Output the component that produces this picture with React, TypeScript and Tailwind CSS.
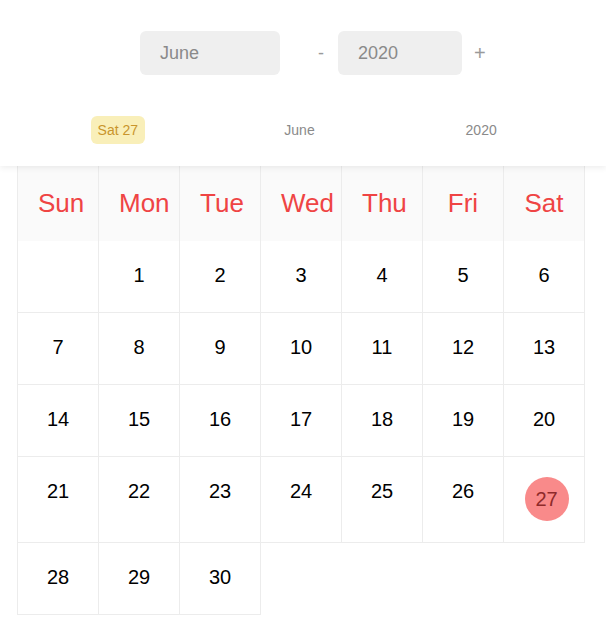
import React from "react";

const DAYS = ["Sun", "Mon", "Tue", "Wed", "Thu", "Fri", "Sat"];

type Cell = { day: number | null };

function buildWeeks(): Cell[][] {
	// June 2020 starts on a Monday, 30 days
	const cells: Cell[] = [{ day: null }];
	for (let d = 1; d <= 30; d++) cells.push({ day: d });
	const weeks: Cell[][] = [];
	for (let i = 0; i < cells.length; i += 7) weeks.push(cells.slice(i, i + 7));
	return weeks;
}

export default function App() {
	const weeks = buildWeeks();
	const selected = 27;

	return (
		<div
			className="min-h-screen bg-white"
			style={{ fontFamily: "'Liberation Sans', Arial, sans-serif" }}
		>
			<header className="relative z-10 h-[166px] bg-white pt-[31px] shadow-[0_2px_6px_rgba(0,0,0,0.07)]">
				<div className="flex items-center pl-[140px]">
					<div className="flex h-11 w-[140px] items-center rounded-md bg-[#efefef] pl-5 text-[18px] text-[#8a8a8a]">
						June
					</div>
					<button className="ml-[38px] text-[18px] text-[#9a9a9a]">-</button>
					<div className="ml-[14px] flex h-11 w-[124px] items-center rounded-md bg-[#efefef] pl-5 text-[18px] text-[#8a8a8a]">
						2020
					</div>
					<button className="ml-[12px] text-[20px] text-[#9a9a9a]">+</button>
				</div>
				<div className="mt-[41px] ml-[27px] grid w-[545px] grid-cols-3 items-center text-[14px] text-[#8a8a8a]">
					<div className="flex justify-center">
						<span className="flex h-7 items-center rounded-md bg-[#f9efb9] px-[7px] text-[#c9952c]">
							Sat 27
						</span>
					</div>
					<div className="text-center">June</div>
					<div className="text-center">2020</div>
				</div>
			</header>

			<div className="ml-[17px] grid w-max grid-cols-[repeat(7,81px)] border-l border-[#ececec]">
				{DAYS.map((d) => (
					<div
						key={d}
						className="flex h-[75px] items-center justify-center whitespace-nowrap border-r border-[#ececec] bg-[#fafafa] px-5 text-center text-[26px] text-[#ef4444]"
					>
						<span className="block w-full text-center">{d}</span>
					</div>
				))}
				{weeks.map((week, wi) =>
					week.map((c, ci) =>
						c.day === selected ? (
							<div
								key={`${wi}-${ci}`}
								className="flex justify-center border-r border-b border-[#ececec] pt-5 pb-[21px]"
							>
								<span className="ml-[5px] flex h-11 w-11 items-center justify-center rounded-full bg-[#f98a8a] text-[20px] text-[#8f2a2a]">
									{c.day}
								</span>
							</div>
						) : (
							<div
								key={`${wi}-${ci}`}
								className="border-r border-b border-[#ececec] pt-5 pb-[23px] text-center text-[20px] leading-7 text-black"
							>
								{c.day ?? ""}
							</div>
						)
					)
				)}
			</div>
		</div>
	);
}
